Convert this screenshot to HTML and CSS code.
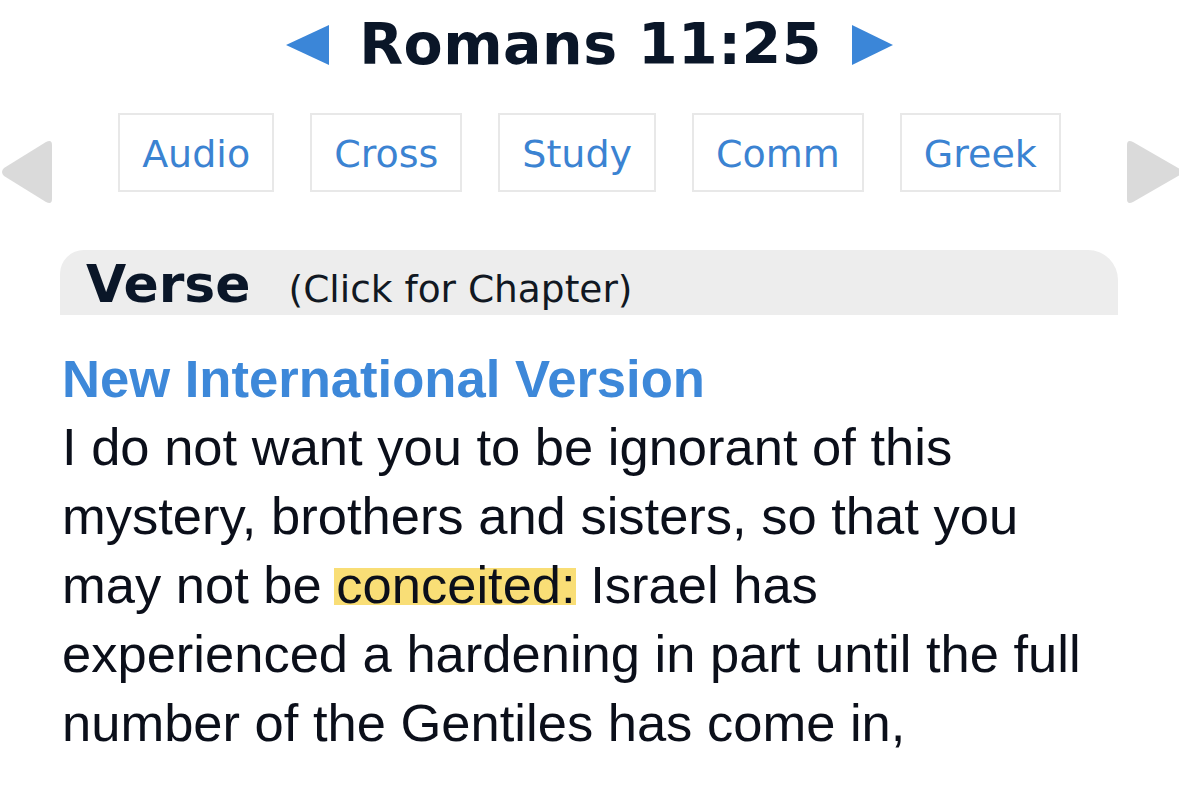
FILE: index.html
```html
<!DOCTYPE html>
<html>
<head>
<meta charset="utf-8">
<link rel="stylesheet" href="styles.css">
</head>
<body>
<div class="title-row">
  <svg class="tri" width="43" height="40" viewBox="0 0 43 40"><polygon points="43,0 43,40 0,20" fill="#3b86d8"/></svg>
  <h1 class="title">Romans 11:25</h1>
  <svg class="tri" width="41" height="40" viewBox="0 0 41 40"><polygon points="0,0 0,40 41,20" fill="#3b86d8"/></svg>
</div>
<div class="nav-row">
  <svg class="side left" width="54" height="66" viewBox="0 0 54 66"><path d="M52 6 Q52 0 46 3 L4 29 Q0 33 4 37 L46 63 Q52 66 52 60 Z" fill="#dadada"/></svg>
  <div class="buttons">
    <span class="btn">Audio</span>
    <span class="btn">Cross</span>
    <span class="btn">Study</span>
    <span class="btn">Comm</span>
    <span class="btn">Greek</span>
  </div>
  <svg class="side right" width="54" height="66" viewBox="0 0 54 66"><path d="M2 6 Q2 0 8 3 L60 33 L8 63 Q2 66 2 60 Z" fill="#dadada"/></svg>
</div>
<main class="content">
  <div class="verse-bar">
    <span class="verse-label">Verse</span>
    <span class="verse-hint">(Click for Chapter)</span>
  </div>
  <h2 class="version">New International Version</h2>
  <p class="verse-text">I do not want you to be ignorant of this mystery, brothers and sisters, so that you may not be <span class="hl">conceited:</span> Israel has experienced a hardening in part until the full number of the Gentiles has come in,</p>
</main>
</body>
</html>
```

FILE: styles.css
```css
html, body {
  margin: 0;
  padding: 0;
  background: #ffffff;
}

body {
  font-family: "DejaVu Sans", Verdana, sans-serif;
  width: 1179px;
  overflow: hidden;
}

.title-row {
  display: flex;
  justify-content: center;
  align-items: center;
  gap: 30px;
  padding-top: 11px;
}

.title {
  margin: 0;
  font-family: "DejaVu Sans", Verdana, sans-serif;
  font-weight: bold;
  font-size: 57px;
  line-height: 66px;
  color: #0a1628;
  letter-spacing: 0.5px;
}

.tri {
  display: block;
  margin-top: 2px;
}

.nav-row {
  display: flex;
  justify-content: space-between;
  align-items: flex-start;
  height: 79px;
  margin-top: 36px;
}

.side {
  display: block;
  margin-top: 26px;
}

.buttons {
  display: flex;
  gap: 36px;
}

.btn {
  display: block;
  box-sizing: border-box;
  height: 79px;
  padding: 0 22px;
  border: 2px solid #e8e8e8;
  font-size: 38px;
  line-height: 79px;
  color: #3b83d2;
}

.content {
  margin: 58px 61px 0 60px;
}

.verse-bar {
  box-sizing: border-box;
  height: 65px;
  background: #ededed;
  border-radius: 24px 30px 0 0;
  padding: 4px 0 0 26px;
  display: flex;
  align-items: baseline;
  gap: 38px;
}

.verse-label {
  font-weight: bold;
  font-size: 52px;
  line-height: 60px;
  color: #0a1628;
}

.verse-hint {
  font-size: 37.5px;
  color: #111822;
}

.version {
  margin: 34px 0 0 2px;
  font-family: "Liberation Sans", Arial, sans-serif;
  font-weight: bold;
  font-size: 52.6px;
  line-height: 60px;
  color: #3d88d9;
}

.verse-text {
  margin: 3px 30px 0 2px;
  font-family: "Liberation Sans", Arial, sans-serif;
  font-size: 52.5px;
  line-height: 69px;
  color: #0b0f1a;
}

.hl {
  background: linear-gradient(to bottom, transparent 22%, #f9de76 22%, #f9de76 84%, transparent 84%);
  border-radius: 6px;
  margin-left: -2px;
  padding-left: 2px;
}
```
